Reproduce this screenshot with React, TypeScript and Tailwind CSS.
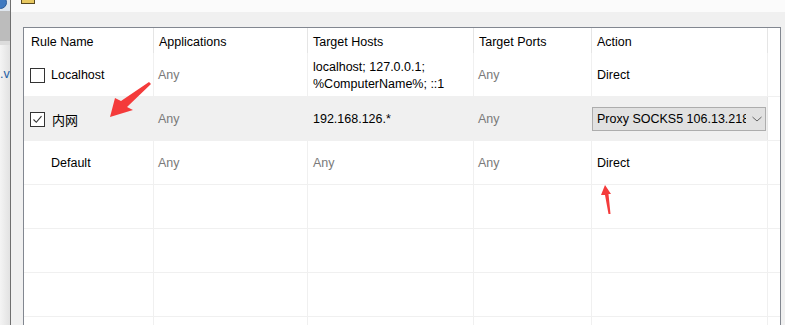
import React from "react";

const font = { fontFamily: '"Liberation Sans", Arial, "Noto Sans CJK SC", sans-serif' };

function Checkbox({ checked }: { checked?: boolean }) {
  return (
    <div className="w-[15px] h-[15px] border border-[#333333] bg-white flex items-center justify-center shrink-0">
      {checked && (
        <svg width="11" height="11" viewBox="0 0 11 11">
          <path d="M1.5 5.5 L4.3 8.3 L9.5 2.2" fill="none" stroke="#333" strokeWidth="1.1" />
        </svg>
      )}
    </div>
  );
}

const cellBase = "border-r border-[#f0f0f0] flex items-center overflow-hidden whitespace-nowrap pt-[2px]";
const any = "text-[#7a7a7a]";
const headCell = "border-r border-[#e5e5e5] flex items-center pt-[3px]";

function EmptyRow() {
  return (
    <div className="grid grid-cols-[130px_154px_166px_118px_176px_12px] h-[44px] border-b border-[#f0f0f0]">
      <div className={cellBase} />
      <div className={cellBase} />
      <div className={cellBase} />
      <div className={cellBase} />
      <div className={cellBase} />
      <div />
    </div>
  );
}

export default function App() {
  return (
    <div className="w-[785px] h-[325px] relative overflow-hidden flex bg-white text-[12.5px] text-black" style={font}>
      {/* background window strip */}
      <div className="w-[10px] h-full flex flex-col shrink-0">
        <div className="h-[11px] bg-[#dfe6ee] relative overflow-hidden">
          <div className="absolute -left-[6px] -top-[4px] w-[13px] h-[13px] rounded-full bg-[#3f79c0] border border-[#2a5a98]" />
        </div>
        <div className="h-[30px] bg-[#bcbcbc]" />
        <div className="h-[4px] bg-[#dcdcdc]" />
        <div className="flex-1 bg-gradient-to-r from-[#f4f4f4] to-[#e2e2e2] relative overflow-hidden">
          <span className="absolute left-0 top-[23px] text-[12.5px] text-[#1f5fa5] leading-none">.v</span>
        </div>
      </div>
      <div className="w-px h-full bg-[#6f6f6f] shrink-0" />
      {/* dialog */}
      <div className="flex-1 flex flex-col">
        <div className="h-[12px] bg-[#fbfbfb] relative shrink-0">
          <div className="absolute left-[10px] top-0 w-[14px] h-[4px] bg-[#e8c860] border-b border-x border-[#5a4a20]" />
        </div>
        <div className="flex-1 bg-[#f0f0f0] pt-[15px] pl-[12px] pr-[4px] flex flex-col">
          <div className="flex-1 bg-white border-t border-x border-[#828790] flex flex-col">
            {/* header */}
            <div className="grid grid-cols-[130px_154px_166px_118px_176px_12px] h-[25px]">
              <div className={`${headCell} pl-[7px]`}>Rule Name</div>
              <div className={`${headCell} pl-[5px]`}>Applications</div>
              <div className={`${headCell} pl-[5px]`}>Target Hosts</div>
              <div className={`${headCell} pl-[5px]`}>Target Ports</div>
              <div className={`${headCell} pl-[5px]`}>Action</div>
              <div />
            </div>
            {/* row 1 */}
            <div className="grid grid-cols-[130px_154px_166px_118px_176px_12px] h-[44px] border-b border-[#f0f0f0]">
              <div className={`${cellBase} pl-[6px] gap-[6px]`}>
                <Checkbox />
                <span>Localhost</span>
              </div>
              <div className={`${cellBase} pl-[4px] ${any}`}>Any</div>
              <div className={`${cellBase} pl-[5px]`}>
                <div className="leading-[17px]">
                  <div>localhost; 127.0.0.1;</div>
                  <div>%ComputerName%; ::1</div>
                </div>
              </div>
              <div className={`${cellBase} pl-[4px] ${any}`}>Any</div>
              <div className={`${cellBase} pl-[5px]`}>Direct</div>
              <div />
            </div>
            {/* row 2 */}
            <div className="grid grid-cols-[130px_154px_166px_118px_176px_12px] h-[44px] border-b border-[#f0f0f0]">
              <div className={`${cellBase} bg-[#f0f0f0] border-[#e6e6e6] pl-[6px] gap-[7px]`}>
                <Checkbox checked />
                <span className="text-[13px]" style={{ fontFamily: '"Noto Sans CJK SC", sans-serif' }}>内网</span>
              </div>
              <div className={`${cellBase} bg-[#f0f0f0] border-[#e6e6e6] pl-[4px] ${any}`}>Any</div>
              <div className={`${cellBase} bg-[#f0f0f0] border-[#e6e6e6] pl-[5px]`}>192.168.126.*</div>
              <div className={`${cellBase} bg-[#f0f0f0] border-[#e6e6e6] pl-[4px] ${any}`}>Any</div>
              <div className="border-r border-[#e6e6e6] bg-[#f0f0f0] flex items-center">
                <div className="w-[174px] h-[24px] border border-[#adadad] bg-[#e1e1e1] flex items-center pt-[1px]">
                  <div className="w-[153px] pl-[4px] overflow-hidden whitespace-nowrap">Proxy SOCKS5 106.13.218.1</div>
                  <svg width="12" height="8" viewBox="0 0 12 8" className="ml-[5px]">
                    <path d="M1.5 2 L6 6 L10.5 2" fill="none" stroke="#555" strokeWidth="0.9" />
                  </svg>
                </div>
              </div>
              <div />
            </div>
            {/* row 3 */}
            <div className="grid grid-cols-[130px_154px_166px_118px_176px_12px] h-[44px] border-b border-[#f0f0f0]">
              <div className={`${cellBase} pl-[27px]`}>Default</div>
              <div className={`${cellBase} pl-[4px] ${any}`}>Any</div>
              <div className={`${cellBase} pl-[5px] ${any}`}>Any</div>
              <div className={`${cellBase} pl-[4px] ${any}`}>Any</div>
              <div className={`${cellBase} pl-[5px]`}>Direct</div>
              <div />
            </div>
            <EmptyRow />
            <EmptyRow />
            <EmptyRow />
            <EmptyRow />
          </div>
        </div>
      </div>
      {/* annotation arrows */}
      <svg className="absolute left-0 top-0 pointer-events-none" width="785" height="325" viewBox="0 0 785 325">
        <polygon points="110,117 115,98 121,101 149,82 151,84 127,107 133,110" fill="#f43b3b" />
        <polygon points="605,185 611,194 608.5,194 610.5,214 608.5,214 605,195 601,195" fill="#f43b3b" />
      </svg>
    </div>
  );
}
